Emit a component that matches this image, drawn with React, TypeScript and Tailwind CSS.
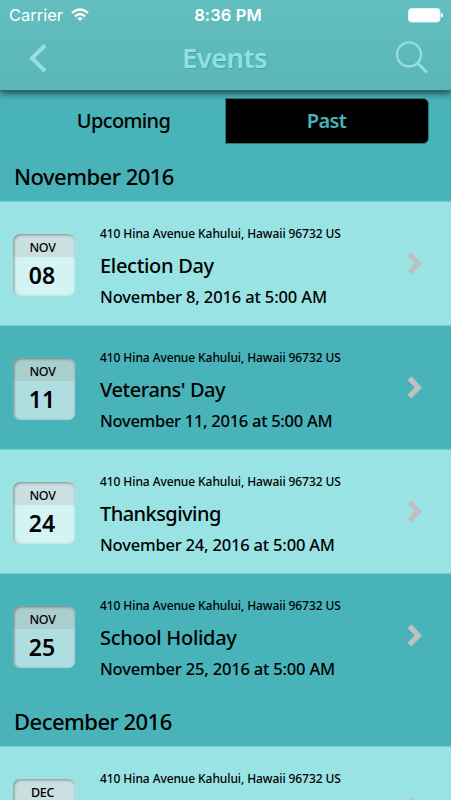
import React from "react";

type EventItem = { month: string; day: string; title: string; titleClass: string; when: string; whenClass: string; light: boolean };

const november: EventItem[] = [
  { month: "NOV", day: "08", title: "Election Day", titleClass: "tracking-[-0.3px]", when: "November 8, 2016 at 5:00 AM", whenClass: "tracking-[-0.14px]", light: true },
  { month: "NOV", day: "11", title: "Veterans' Day", titleClass: "tracking-[-0.43px]", when: "November 11, 2016 at 5:00 AM", whenClass: "tracking-[-0.28px]", light: false },
  { month: "NOV", day: "24", title: "Thanksgiving", titleClass: "tracking-[-0.55px]", when: "November 24, 2016 at 5:00 AM", whenClass: "tracking-[-0.19px]", light: true },
  { month: "NOV", day: "25", title: "School Holiday", titleClass: "tracking-[-0.3px]", when: "November 25, 2016 at 5:00 AM", whenClass: "tracking-[-0.18px]", light: false },
];

const december: EventItem[] = [
  { month: "DEC", day: "", title: "", titleClass: "", when: "", whenClass: "", light: true },
];

function EventRow({ item }: { item: EventItem }) {
  return (
    <div className={`flex h-[124px] shrink-0 border-t ${item.light ? "border-[#72cbce] bg-[#9ae3e4]" : "border-[#72cbce] bg-[#48b3b8]"}`}>
      <div className="mt-[32px] ml-[13px] h-[62px] w-[62px] shrink-0 overflow-hidden rounded-[7px] bg-white/57 text-center font-medium shadow-[inset_1px_1px_3px_rgba(0,0,0,0.4),0_0_1px_rgba(255,255,255,0.5)]">
        <div className="h-[23px] bg-[#805050]/12 pt-[2px] pr-[3px] text-[12.5px] leading-[24px] tracking-[-0.3px]">{item.month}</div>
        <div className="pr-[4px] text-[23px] leading-[37px] font-semibold">{item.day}</div>
      </div>
      <div className="ml-[25px] w-[290px] shrink-0 pt-[24px] font-medium whitespace-nowrap">
        <div className="h-[16px] text-[12px] leading-[16px] tracking-[-0.09px]">410 Hina Avenue Kahului, Hawaii 96732 US</div>
        <div className={`mt-[9px] h-[29px] text-[20px] leading-[29px] ${item.titleClass}`}>{item.title}</div>
        <div className={`mt-[5px] h-[24px] text-[16.5px] leading-[24px] ${item.whenClass}`}>{item.when}</div>
      </div>
      <svg className="mt-[49px] ml-[15px] h-[26px] w-[20px] shrink-0" viewBox="0 0 20 26" fill="none" stroke="#c0c0c0" strokeWidth="5.3">
        <path d="M4.5 3.2 L13.3 12.4 L4.5 21.6" />
      </svg>
    </div>
  );
}

export default function App() {
  return (
    <div className="flex h-[800px] w-[451px] flex-col overflow-hidden bg-[#48b3b8] font-['Noto_Sans',sans-serif] text-black">
      <header className="relative h-[91px] shrink-0 border-b border-[#2d696c] bg-linear-to-b from-[#63bec0] to-[#5ab6b8] shadow-[0_2px_7px_rgba(0,0,0,0.65)]">
        <div className="grid h-[30px] grid-cols-3 items-center px-[9px] font-['Inter',sans-serif] text-[16.5px] text-white">
          <div className="flex items-center gap-[8px]">
            <span className="tracking-[0px]">Carrier</span>
            <svg className="h-[14px] w-[18px]" viewBox="0 0 18 14" fill="none" stroke="white" strokeWidth="2.3">
              <path d="M1 5 Q9 -2 17 5" />
              <path d="M4 8.3 Q9 4 14 8.3" />
              <path d="M6.3 10.2 Q9 8.2 11.7 10.2 L9 13 Z" fill="white" stroke="none" />
            </svg>
          </div>
          <div className="pl-[5px] text-center font-semibold tracking-[0.1px] whitespace-nowrap">8:36 PM</div>
          <svg className="mr-[-1px] h-[15px] w-[35px] justify-self-end" viewBox="0 0 35 15">
            <rect x="0.5" y="0.5" width="31.5" height="13.5" rx="3" fill="white" stroke="#ddf2f2" />
            <path d="M33 5 Q35 5 35 7.2 Q35 9.5 33 9.5 Z" fill="white" />
          </svg>
        </div>
        <div className="flex h-[56px] items-center">
          <svg className="ml-[28px] h-[30px] w-[20px]" viewBox="0 0 20 30" fill="none" stroke="#96dfe0" strokeWidth="4">
            <path d="M17 2.5 L4 15.3 L17 28" />
          </svg>
          <h1 className="ml-[134px] w-[90px] text-[27.5px] leading-[40px] font-semibold tracking-[-0.65px] text-[#96dfe0] [text-shadow:1px_1px_1px_#3ba9b0]">Events</h1>
          <svg className="ml-[123px] h-[34px] w-[34px]" viewBox="0 0 34 34" fill="none" stroke="#96dfe0" strokeWidth="2.2">
            <circle cx="14" cy="13.4" r="12" />
            <path d="M22.5 22 L32 31.5" strokeWidth="2.8" />
          </svg>
        </div>
      </header>
      <div className="mt-[7px] ml-[22px] flex h-[46px] w-[407px] shrink-0 text-[20px] font-medium">
        <div className="flex w-[203px] items-center justify-center tracking-[-0.65px]">Upcoming</div>
        <div className="flex w-[204px] items-center justify-center rounded-r-[6px] border border-[#287b7e] bg-black pr-px font-semibold tracking-[-0.6px] text-[#48b3b8]">Past</div>
      </div>
      <h2 className="h-[57px] shrink-0 pl-[14px] text-[22px] leading-[64px] font-medium tracking-[-0.53px]">November 2016</h2>
      {november.map((item) => <EventRow key={item.day} item={item} />)}
      <h2 className="h-[49px] shrink-0 pl-[14px] text-[22px] leading-[48px] font-medium tracking-[-0.53px]">December 2016</h2>
      {december.map((item) => <EventRow key={item.month} item={item} />)}
    </div>
  );
}
